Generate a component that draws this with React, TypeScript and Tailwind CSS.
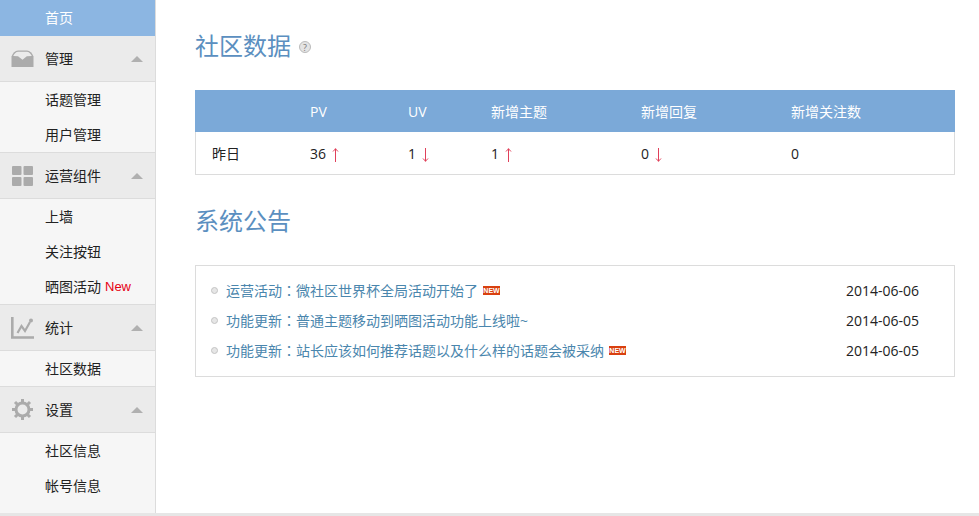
import type { ReactNode } from "react";

const sans = "font-['Open_Sans','Noto_Sans_CJK_SC',sans-serif]";

function Caret() {
  return <span className="ml-auto mr-[12px] h-0 w-0 border-x-[6px] border-b-[6px] border-x-transparent border-b-[#b0b0b0]" />;
}

function InboxIcon() {
  return (
    <svg width="23" height="17" viewBox="0 0 23 17">
      <path d="M0.500 6.500C2 3 4 0.500 7 0.500h9c3 0 5 2.500 6.500 6V17H0.500z" fill="#ababab" />
      <path d="M2.200 6C3.500 3.500 5 1.800 7.200 1.800h8.600C18 1.800 19.500 3.500 20.800 6l-5 0.200L11.500 9.800 7 6.200z" fill="#ebebeb" />
    </svg>
  );
}

function GridIcon() {
  return (
    <svg width="21" height="20" viewBox="0 0 21 20" fill="#ababab">
      <rect width="9.500" height="9" rx="1" />
      <rect x="11.500" width="9.500" height="9" rx="1" />
      <rect y="11" width="9.500" height="9" rx="1" />
      <rect x="11.500" y="11" width="9.500" height="9" rx="1" />
    </svg>
  );
}

function ChartIcon() {
  return (
    <svg width="23" height="22" viewBox="0 0 23 22" fill="none" stroke="#ababab">
      <path d="M1.300 0v20.500H23" strokeWidth="2.600" />
      <path d="M6.500 16l4-7 3.500 5 5-9" strokeWidth="2.200" />
      <circle cx="20" cy="3.500" r="2" fill="#ababab" stroke="none" />
    </svg>
  );
}

function GearIcon() {
  return (
    <svg width="21" height="21" viewBox="0 0 21 21" fill="none" stroke="#ababab">
      <circle cx="10.500" cy="10.500" r="6.500" strokeWidth="3" />
      <path d="M10.500 0v4M10.500 17v4M0 10.500h4M17 10.500h4M3 3l2.800 2.800M15.200 15.200L18 18M3 18l2.800-2.800M15.200 5.800L18 3" strokeWidth="3" />
    </svg>
  );
}

function Group({ icon, title, items }: { icon: ReactNode; title: string; items: ReactNode[] }) {
  return (
    <div className="border-b border-[#dcdcdc] last:border-b-0">
      <div className="flex h-[46px] items-center border-b border-[#dcdcdc] bg-[#ebebeb]">
        <span className="flex w-[45px] justify-center pr-[1px]">{icon}</span>
        <span>{title}</span>
        <Caret />
      </div>
      {items.map((item, i) => (
        <div key={i} className="flex h-[35px] items-center pl-[45px]">
          {item}
        </div>
      ))}
    </div>
  );
}

function Sidebar() {
  return (
    <aside className="w-[156px] shrink-0 border-r border-[#dcdcdc] bg-[#f6f6f6] text-[14px] text-[#222]">
      <div className="flex h-[36px] items-center bg-[#8cb6e2] pb-[2px] pl-[45px] text-white">首页</div>
      <Group icon={<InboxIcon />} title="管理" items={["话题管理", "用户管理"]} />
      <Group
        icon={<GridIcon />}
        title="运营组件"
        items={[
          "上墙",
          "关注按钮",
          <>
            晒图活动
            <span className="ml-[4px] font-['Liberation_Sans',sans-serif] text-[13px] text-[#e60012]">New</span>
          </>,
        ]}
      />
      <Group icon={<ChartIcon />} title="统计" items={["社区数据"]} />
      <Group icon={<GearIcon />} title="设置" items={["社区信息", "帐号信息"]} />
    </aside>
  );
}

function Arrow({ down }: { down?: boolean }) {
  return (
    <svg width="7" height="14" viewBox="0 0 7 14" fill="none" stroke="#e0405a" className={`ml-[6px] mt-[3px] ${down ? "rotate-180" : ""}`}>
      <path d="M3.500 0.500V14M1 3.500L3.500 0.800 6 3.500" />
    </svg>
  );
}

function NewTag() {
  return (
    <span className="ml-[5px] inline-flex h-[9px] w-[17px] items-center justify-center bg-[#d9400f] font-['Liberation_Sans',sans-serif] text-[7px] font-bold leading-none text-white">
      NEW
    </span>
  );
}

const notices = [
  { kind: "运营活动", text: "微社区世界杯全局活动开始了", date: "2014-06-06", tag: true },
  { kind: "功能更新", text: "普通主题移动到晒图活动功能上线啦~", date: "2014-06-05", tag: false },
  { kind: "功能更新", text: "站长应该如何推荐话题以及什么样的话题会被采纳", date: "2014-06-05", tag: true },
];

const cols = "grid grid-cols-[98px_98px_83px_150px_150px_1fr] items-center";
const cell = "flex items-center";

export default function App() {
  return (
    <div className={`h-[516px] w-[979px] overflow-hidden bg-white ${sans}`}>
      <div className="flex h-[513px]">
        <Sidebar />
        <main className="flex-1 pl-[39px] pr-6 text-[14px]">
          <div className="flex h-[90px] items-start pt-[28px]">
            <h1 className="text-[24px] leading-[36px] text-[#5b8fc0]">社区数据</h1>
            <span className="ml-[8px] mt-[13px] flex h-[12px] w-[12px] items-center justify-center rounded-full border border-[#bbb] bg-[#e4e4e4] text-[9px] leading-none text-[#777]">?</span>
          </div>
          <div className="border-x border-b border-[#dcdcdc]">
            <div className={`${cols} -mx-px h-[42px] bg-[#7ba9d8] pl-[17px] text-white`}>
              <span />
              <span>PV</span>
              <span>UV</span>
              <span>新增主题</span>
              <span>新增回复</span>
              <span>新增关注数</span>
            </div>
            <div className={`${cols} h-[42px] pl-4 text-[#222]`}>
              <span>昨日</span>
              <span className={cell}>36<Arrow /></span>
              <span className={cell}>1<Arrow down /></span>
              <span className={cell}>1<Arrow /></span>
              <span className={cell}>0<Arrow down /></span>
              <span>0</span>
            </div>
          </div>
          <h2 className="mt-[28px] text-[24px] leading-[36px] text-[#5b8fc0]">系统公告</h2>
          <div className="mt-[26px] border border-[#dcdcdc] pb-[11px] pl-[15px] pt-[9px]">
            {notices.map((n, i) => (
              <div key={i} className="flex h-[30px] items-center">
                <span className="h-[7px] w-[7px] rounded-full border border-[#c4c4c4] bg-[#e6e6e6]" />
                <span className="ml-[8px] text-[#4a86ad]">
                  {n.kind}
                  <span className="font-['Noto_Sans_CJK_TC',sans-serif]">：</span>
                  {n.text}
                </span>
                {n.tag && <NewTag />}
                <span className="ml-auto mr-[35px] text-[#222]">{n.date}</span>
              </div>
            ))}
          </div>
        </main>
      </div>
      <div className="h-[3px] bg-[#e6e6e6]" />
    </div>
  );
}
